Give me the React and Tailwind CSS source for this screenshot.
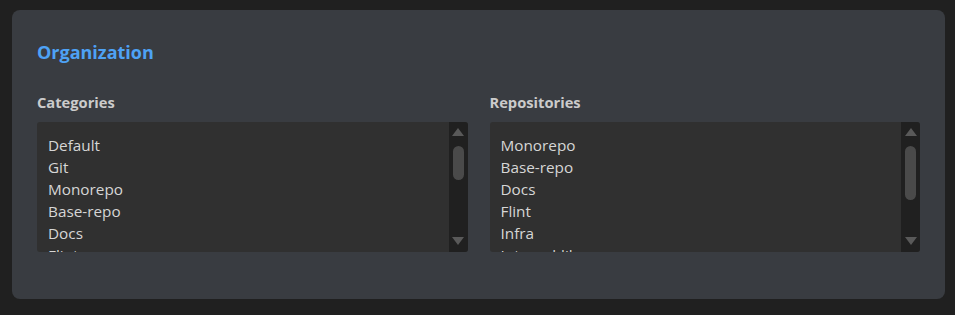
export default function App() {
  const categories = ["Default", "Git", "Monorepo", "Base-repo", "Docs", "Flint", "Infra"];
  const repos = ["Monorepo", "Base-repo", "Docs", "Flint", "Infra", "Internal-lib", "Tools"];
  const ListBox = ({ items, thumbH }) => (
    <div className="flex h-[130px] rounded-[3px] overflow-hidden bg-[#303030]">
      <div className="flex-1 overflow-hidden pt-[12px] pl-[11px] text-[15.3px] leading-[22px] text-[#d6d6d6]">
        {items.map((t) => (
          <div key={t}>{t}</div>
        ))}
      </div>
      <div className="w-[19px] bg-[#202020] flex flex-col items-center">
        <div className="mt-[6px] w-0 h-0 border-l-[6px] border-r-[6px] border-b-[8px] border-l-transparent border-r-transparent border-b-[#595959]" />
        <div className={`mt-[10px] w-[11px] rounded-full bg-[#4a4a4a] ${thumbH}`} />
        <div className="flex-1" />
        <div className="mb-[7px] w-0 h-0 border-l-[6px] border-r-[6px] border-t-[8px] border-l-transparent border-r-transparent border-t-[#595959]" />
      </div>
    </div>
  );
  return (
    <div className="w-[955px] h-[315px] bg-[#202020] pt-[10px] pl-[12px] pr-[10px] font-['Open_Sans',sans-serif]">
      <div className="h-[289px] rounded-[8px] bg-[#393c41] px-[25px] pt-[30px]">
        <h2 className="text-[18px] font-bold leading-[24px] text-[#4ea2f5]">Organization</h2>
        <div className="mt-[28px] grid grid-cols-2 gap-[22px]">
          <div>
            <div className="text-[14.7px] font-bold leading-[20px] text-[#cbcbcb] mb-[10px]">Categories</div>
            <ListBox items={categories} thumbH="h-[34px]" />
          </div>
          <div>
            <div className="text-[14.7px] font-bold leading-[20px] text-[#cbcbcb] mb-[10px]">Repositories</div>
            <ListBox items={repos} thumbH="h-[54px]" />
          </div>
        </div>
      </div>
    </div>
  );
}
